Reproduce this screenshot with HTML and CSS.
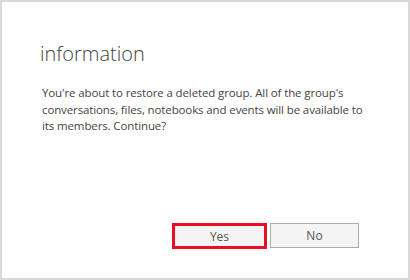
FILE: index.html
```html
<!DOCTYPE html>
<html>
<head>
    <meta charset="UTF-8">
    <title>information</title>
    <link rel="stylesheet" href="styles.css">
</head>
<body>
    <div class="dialog">
        <h1 class="title">information</h1>
        <p class="message">You're about to restore a deleted group. All of the group's conversations, files, notebooks and events will be available to its members. Continue?</p>
        <div class="actions">
            <button class="btn btn-yes">Yes</button>
            <button class="btn">No</button>
        </div>
    </div>
</body>
</html>
```

FILE: styles.css
```css
body {
    margin: 0;
    font-family: 'Open Sans', 'Noto Sans', sans-serif;
    background-color: #ffffff;
}
.dialog {
    box-sizing: border-box;
    width: 410px;
    height: 280px;
    border: 2px solid #d9d9d9;
    padding: 38px 49px 29px 38px;
    display: flex;
    flex-direction: column;
}
.title {
    margin: 0;
    font-size: 20px;
    font-weight: 300;
    color: #444444;
    line-height: 28px;
}
.message {
    margin: 17px -10px 0 2px;
    font-size: 11.5px;
    letter-spacing: -0.12px;
    line-height: 16.5px;
    color: #444444;
}
.actions {
    margin-top: auto;
    display: flex;
    justify-content: flex-end;
    align-items: flex-start;
    gap: 3px;
}
.btn {
    box-sizing: border-box;
    width: 89px;
    height: 25px;
    border: 1px solid #a6adad;
    background-color: #f4f4f4;
    font-family: 'Open Sans', 'Noto Sans', sans-serif;
    font-size: 12px;
    color: #555555;
    padding: 0;
}
.btn-yes {
    width: 95px;
    height: 26px;
    border: 3px solid #e81123;
}
```
